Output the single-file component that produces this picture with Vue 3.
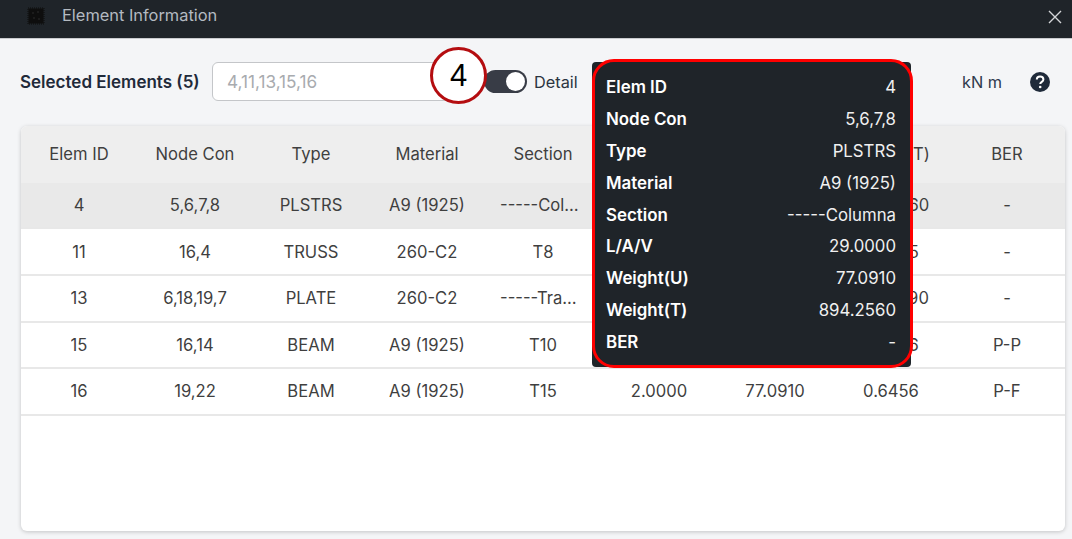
<script setup>
const cols = ['Elem ID', 'Node Con', 'Type', 'Material', 'Section', 'L/A/V', 'Weight(U)', 'Weight(T)', 'BER']
const rows = [
  ['4', '5,6,7,8', 'PLSTRS', 'A9 (1925)', '-----Columna', '29.0000', '77.0910', '894.2560', '-'],
  ['11', '16,4', 'TRUSS', '260-C2', 'T8', '3.0000', '77.0910', '0.9685', '-'],
  ['13', '6,18,19,7', 'PLATE', '260-C2', '-----Trabalho', '12.0000', '77.0910', '370.0490', '-'],
  ['15', '16,14', 'BEAM', 'A9 (1925)', 'T10', '2.0000', '77.0910', '0.6456', 'P-P'],
  ['16', '19,22', 'BEAM', 'A9 (1925)', 'T15', '2.0000', '77.0910', '0.6456', 'P-F'],
]
const tip = cols.map((label, i) => ({ label, value: rows[0][i] }))
</script>

<template>
  <div class="page">
    <header class="titlebar">
      <div class="title-left">
        <svg class="logo" width="18" height="18" viewBox="0 0 18 18">
          <rect x="1.5" y="1.5" width="15" height="15" fill="#0e0e0e" />
          <rect x="1" y="1" width="16" height="16" fill="none" stroke="#0c0c0c" stroke-width="1" stroke-dasharray="1 1" />
          <path d="M5 5h2v2H5zM10 4h2v2h-2zM6 10h2v2H6zM11 11h2v2h-2z" fill="#1c1c1c" />
        </svg>
        <span class="title">Element Information</span>
      </div>
      <svg class="close" width="14" height="14" viewBox="0 0 14 14">
        <path d="M1 1 L13 13 M13 1 L1 13" stroke="#d4d6d8" stroke-width="1.4" fill="none" />
      </svg>
    </header>

    <main class="content">
      <div class="toolbar">
        <span class="sel-label">Selected Elements (5)</span>
        <div class="input">4,11,13,15,16</div>
        <div class="toggle"><span class="knob"></span></div>
        <span class="detail">Detail</span>
        <span class="units">kN m</span>
        <svg class="help" width="20" height="20" viewBox="0 0 20 20">
          <circle cx="10" cy="10" r="10" fill="#1f2a3a" />
          <path d="M6.8 7.6 C6.8 5.7 8.2 4.6 10.1 4.6 C12 4.6 13.4 5.7 13.4 7.4 C13.4 9.9 10.2 9.8 10.2 12.1" fill="none" stroke="#fff" stroke-width="2" />
          <circle cx="10.2" cy="15" r="1.3" fill="#fff" />
        </svg>
      </div>

      <section class="card">
        <div class="grid head">
          <div v-for="c in cols" :key="c" class="cell">{{ c }}</div>
        </div>
        <div v-for="(r, i) in rows" :key="r[0]" class="grid row" :class="{ active: i === 0 }">
          <div v-for="(v, j) in r" :key="j" class="cell"><span class="clip">{{ v }}</span></div>
        </div>
      </section>
    </main>

    <div class="badge">4</div>

    <aside class="tooltip">
      <div v-for="t in tip" :key="t.label" class="tip-row">
        <span class="tip-label">{{ t.label }}</span>
        <span class="tip-value">{{ t.value }}</span>
      </div>
    </aside>
    <div class="redbox"></div>
  </div>
</template>

<style>
html, body { margin: 0; background: #f4f5f7; }
</style>

<style scoped>
.page {
  position: relative;
  width: 1072px;
  height: 539px;
  overflow: hidden;
  font-family: Inter, "Liberation Sans", sans-serif;
  background: #f4f5f7;
}
.titlebar {
  height: 39px;
  box-sizing: border-box;
  background: #1f2429;
  border-bottom: 1px solid #c9cbce;
  display: flex;
  align-items: center;
  justify-content: space-between;
  padding: 0 10px 8px 27px;
}
.title-left { display: flex; align-items: center; gap: 17px; }
.logo { display: block; margin-top: 1px; }
.title { color: #b4bac1; font-size: 16.4px; line-height: 20px; }
.close { display: block; margin-top: 3px; }
.content { padding: 23px 7px 0 20px; }
.toolbar {
  height: 39px;
  display: flex;
  align-items: center;
  margin-bottom: 25px;
}
.sel-label { width: 192px; font-size: 17px; font-weight: 600; color: #1f2a3a; white-space: nowrap; }
.input {
  width: 238px;
  height: 39px;
  box-sizing: border-box;
  margin-right: 34px;
  padding: 0 14px;
  display: flex;
  align-items: center;
  background: #fff;
  border: 1px solid #c4c6c9;
  border-radius: 6px;
  color: #a8abaf;
  font-size: 17.2px;
}
.toggle {
  width: 43px;
  height: 23px;
  border-radius: 12px;
  background: #383c46;
  position: relative;
  margin-right: 7px;
}
.knob {
  position: absolute;
  right: 2px;
  top: 2px;
  width: 19px;
  height: 19px;
  border-radius: 50%;
  background: #fff;
}
.detail { width: 428px; font-size: 16.3px; color: #2b3440; }
.units { width: 68px; font-size: 16.3px; color: #2f3a4c; }
.help { display: block; }
.card {
  height: 405px;
  width: 1044px;
  margin-left: 1px;
  background: #fff;
  border-radius: 6px;
  box-shadow: 0 1px 4px rgba(0, 0, 0, 0.2);
  overflow: hidden;
  color: #3f3f3f;
  font-size: 16.6px;
}
.grid { display: grid; grid-template-columns: repeat(9, 116px); }
.head { height: 56.8px; padding-bottom: 1px; box-sizing: border-box; background: #eeeeee; }
.row { height: 46.6px; box-sizing: border-box; border-bottom: 2px solid #e8e8e8; }
.row.active { background: #e9e9e9; }
.cell {
  display: flex;
  align-items: center;
  justify-content: center;
  min-width: 0;
  padding: 0 15px;
}
.clip { overflow: hidden; white-space: nowrap; text-overflow: ellipsis; }
.badge {
  position: absolute;
  left: 430px;
  top: 47px;
  width: 57px;
  height: 57px;
  box-sizing: border-box;
  border: 3px solid #b40d10;
  border-radius: 50%;
  background: #fff;
  color: #000;
  font-family: "Liberation Sans", sans-serif;
  font-size: 31px;
  display: flex;
  align-items: center;
  justify-content: center;
}
.tooltip {
  position: absolute;
  left: 592px;
  top: 62px;
  width: 319px;
  height: 305px;
  box-sizing: border-box;
  background: #1f2429;
  border-radius: 4px;
  padding: 9px 15px 0 14px;
  color: #fff;
  font-size: 16.8px;
}
.tip-row { height: 31.9px; display: flex; align-items: center; justify-content: space-between; }
.tip-label { font-weight: 600; font-size: 16.9px; }
.tip-value { color: #f0f0f0; }
.redbox {
  position: absolute;
  left: 592px;
  top: 59px;
  width: 321px;
  height: 309px;
  box-sizing: border-box;
  border: 3px solid #f00;
  border-radius: 22px;
}
</style>
